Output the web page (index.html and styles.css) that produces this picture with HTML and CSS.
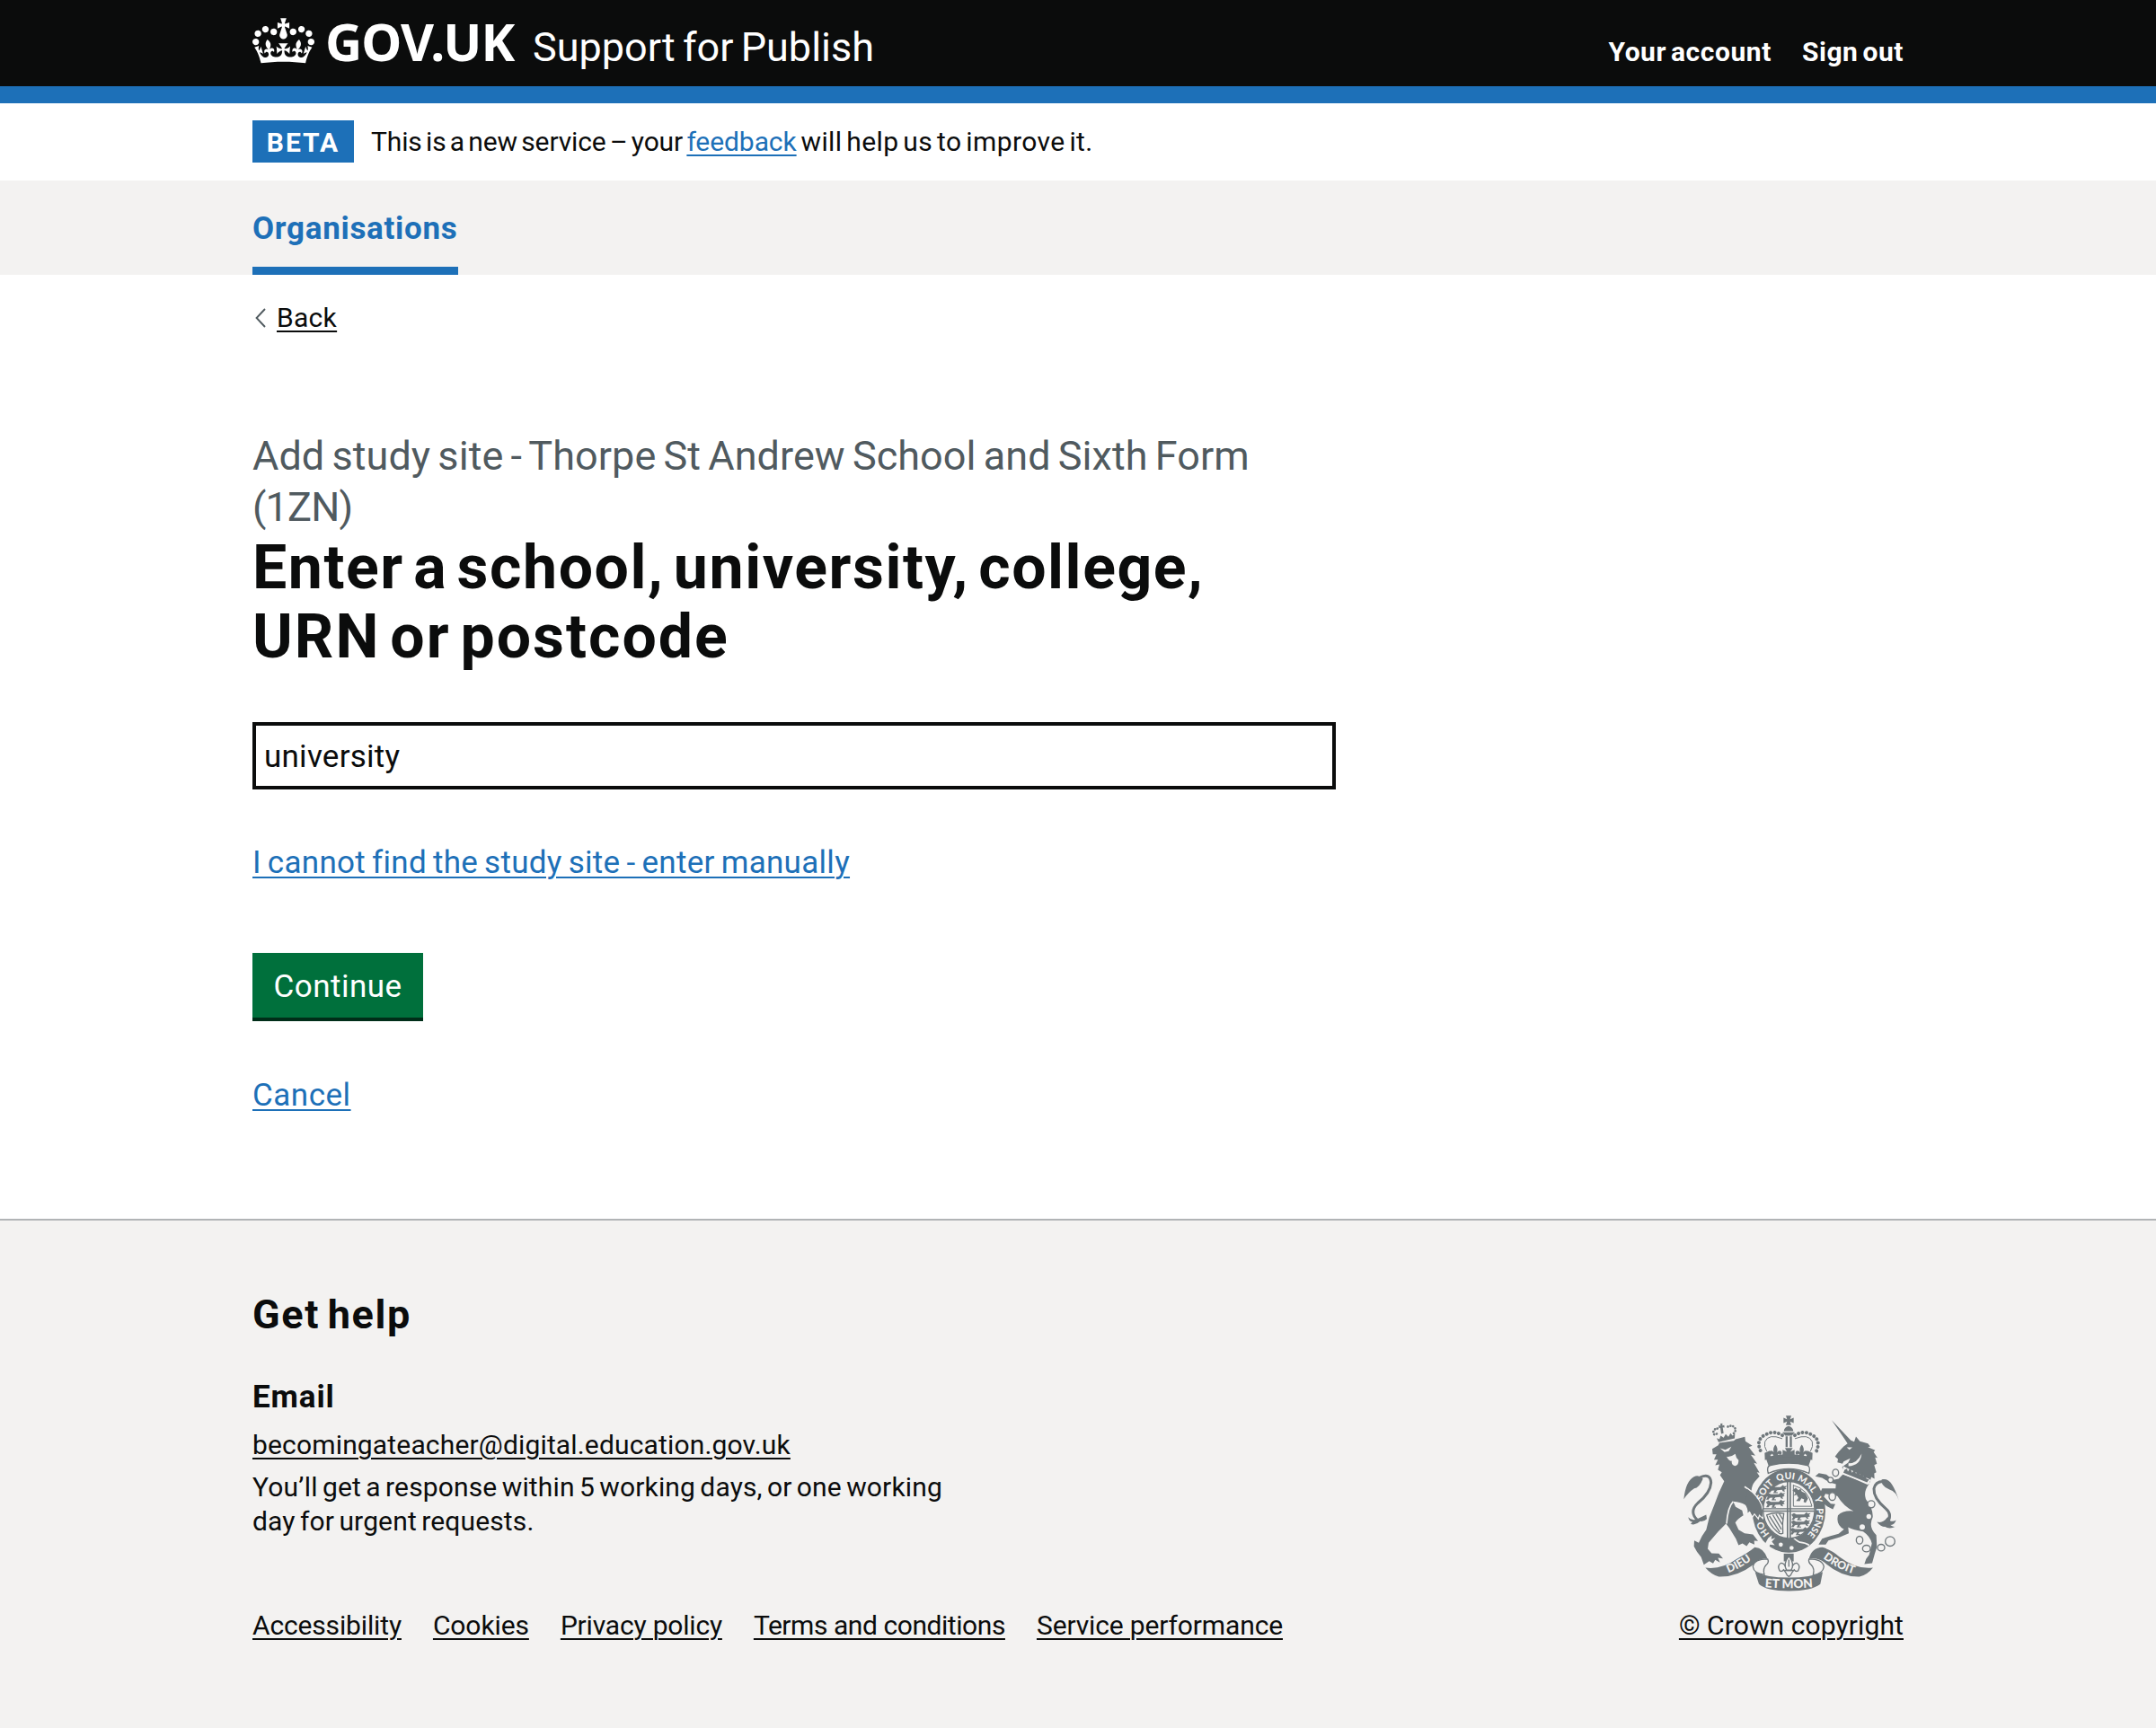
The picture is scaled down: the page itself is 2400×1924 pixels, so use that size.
FILE: index.html
```html
<!DOCTYPE html>
<html lang="en">
<head>
<meta charset="utf-8">
<title>Enter a school, university, college, URN or postcode - Support for Publish - GOV.UK</title>
<link rel="stylesheet" href="styles.css">
</head>
<body>
<header class="header">
  <div class="container header-inner">
    <a class="logo" href="#">
      <svg class="crown" viewBox="0 0 132 97" aria-hidden="true"><path fill="currentColor" fill-rule="evenodd" d="M25 30.2c3.5 1.5 7.7-.2 9.1-3.7 1.5-3.6-.2-7.8-3.9-9.2-3.6-1.4-7.6.3-9.1 3.9-1.4 3.5.3 7.5 3.9 9zM9 39.5c3.6 1.5 7.8-.2 9.2-3.7 1.5-3.6-.2-7.8-3.9-9.1-3.6-1.5-7.6.2-9.1 3.8-1.4 3.5.3 7.5 3.8 9zM4.4 57.2c3.5 1.5 7.7-.2 9.1-3.8 1.5-3.6-.2-7.7-3.9-9.1-3.5-1.5-7.6.3-9.1 3.8-1.4 3.5.3 7.6 3.9 9.1zm38.3-21.4c3.5 1.5 7.7-.2 9.1-3.8 1.5-3.6-.2-7.7-3.9-9.1-3.6-1.5-7.6.3-9.1 3.8-1.3 3.6.4 7.7 3.9 9.1zm64.4-5.6c-3.6 1.5-7.8-.2-9.1-3.7-1.5-3.6.2-7.8 3.8-9.2 3.6-1.4 7.7.3 9.2 3.9 1.3 3.5-.4 7.5-3.9 9zm15.9 9.3c-3.6 1.5-7.7-.2-9.1-3.7-1.5-3.6.2-7.8 3.7-9.1 3.6-1.5 7.7.2 9.2 3.8 1.5 3.5-.3 7.5-3.8 9zm4.7 17.7c-3.6 1.5-7.8-.2-9.2-3.8-1.5-3.6.2-7.7 3.9-9.1 3.6-1.5 7.7.3 9.2 3.8 1.3 3.5-.4 7.6-3.9 9.1zM89.3 35.8c-3.6 1.5-7.8-.2-9.2-3.8-1.4-3.6.2-7.7 3.9-9.1 3.6-1.5 7.7.3 9.2 3.8 1.4 3.6-.3 7.7-3.9 9.1zM69.7 17.7l8.9 4.7V9.3l-8.9 2.8c-.2-.3-.5-.6-.9-.9L72.4 0H59.6l3.5 11.2c-.3.3-.6.5-.9.9l-8.8-2.8v13.1l8.8-4.7c.3.3.6.7.9.9l-5 15.4v.1c-.2.8-.4 1.6-.4 2.4 0 4.1 3.1 7.5 7 8.1h.2c.3 0 .7.1 1 .1.4 0 .7 0 1-.1h.2c4-.6 7.1-4.1 7.1-8.1 0-.8-.1-1.7-.4-2.4V34l-5.1-15.4c.4-.2.7-.6 1-.9zM66 92.8c16.9 0 32.8 1.1 47.1 3.2 4-16.9 8.9-26.7 14-33.5l-9.6-3.4c1 4.9 1.1 7.2 0 10.2-1.5-1.4-3-4.3-4.2-8.7L108.6 76c2.8-2 5-3.2 7.5-3.3-4.4 9.4-10 11.9-13.6 11.2-4.3-.8-6.3-4.6-5.6-7.9 1-4.7 5.7-5.9 8-.5 4.3-8.7-3-11.4-7.6-8.8 7.1-7.2 7.9-13.5 2.1-21.1-8 6.1-8.1 12.3-4.5 20.8-4.7-5.4-12.1-2.5-9.5 6.2 3.4-5.2 7.9-2 7.2 3.1-.6 4.3-6.4 7.8-13.5 7.2-10.3-.9-10.9-8-11.2-13.8 2.5-.5 7.1 1.8 11 7.3L80.2 60c-4.1 4.4-8 5.3-12.3 5.4 1.4-4.4 8-11.6 8-11.6H55.5s6.4 7.2 7.9 11.6c-4.2-.1-8-1-12.3-5.4l1.4 16.4c3.9-5.5 8.5-7.7 10.9-7.3-.3 5.8-.9 12.8-11.1 13.8-7.2.6-12.9-2.9-13.5-7.2-.7-5 3.8-8.3 7.1-3.1 2.7-8.7-4.6-11.6-9.4-6.2 3.7-8.5 3.6-14.7-4.6-20.8-5.8 7.6-5 13.9 2.2 21.1-4.7-2.6-11.9.1-7.7 8.8 2.3-5.5 7.1-4.2 8.1.5.7 3.3-1.3 7.1-5.7 7.9-3.5.7-9-1.8-13.5-11.2 2.5.1 4.7 1.3 7.5 3.3l-4.7-15.4c-1.2 4.4-2.7 7.2-4.3 8.7-1.1-3-.9-5.3 0-10.2l-9.5 3.4c5 6.9 9.9 16.7 14 33.5 14.8-2.1 30.8-3.2 47.7-3.2z"/></svg>
      <span class="logo-text">GOV.UK</span>
    </a>
    <a class="service-name" href="#">Support for Publish</a>
    <nav class="account-nav">
      <a class="account-link" href="#">Your account</a>
      <a class="account-link sign-out" href="#">Sign out</a>
    </nav>
  </div>
</header>

<div class="phase-banner">
  <div class="container phase-inner">
    <strong class="tag">BETA</strong>
    <span class="phase-text">This is a new service – your <a class="link feedback" href="#">feedback</a><span class="phase-end"> will help us to improve it.</span></span>
  </div>
</div>

<nav class="primary-nav">
  <div class="container primary-inner">
    <a class="primary-link" href="#">Organisations</a>
  </div>
</nav>

<div class="container content">
  <a class="back" href="#">
    <svg class="back-arrow" viewBox="0 0 12 22" aria-hidden="true"><path d="M11 1 1.6 11 11 21" fill="none" stroke="#505a5f" stroke-width="1.9"/></svg>
    <span class="back-text">Back</span>
  </a>
  <main class="main">
    <h1 class="title"><span class="caption">Add study site - Thorpe St Andrew School and Sixth Form <span class="code">(1ZN)</span></span>
      <span class="title-line">Enter a school, university, college,</span>
      <span class="title-line second">URN or postcode</span>
    </h1>
    <input class="search" type="text" value="university" aria-label="School, university, college, URN or postcode">
    <a class="link body-link" href="#">I cannot find the study site - enter manually</a>
    <button class="button" type="button">Continue</button>
    <a class="link body-link cancel" href="#">Cancel</a>
  </main>
</div>

<footer class="footer">
  <div class="container footer-inner">
    <div class="footer-main">
      <h2 class="help-title">Get help</h2>
      <h3 class="email-title">Email</h3>
      <a class="footer-link email" href="#">becomingateacher@digital.education.gov.uk</a>
      <p class="response">You’ll get a response within 5 working days, or one working <span class="response-end">day for urgent requests.</span></p>
      <ul class="footer-links">
        <li><a class="footer-link l1" href="#">Accessibility</a></li>
        <li><a class="footer-link l2" href="#">Cookies</a></li>
        <li><a class="footer-link l3" href="#">Privacy policy</a></li>
        <li><a class="footer-link l4" href="#">Terms and conditions</a></li>
        <li><a class="footer-link l5" href="#">Service performance</a></li>
      </ul>
    </div>
    <div class="footer-crest">
      <svg class="crest" viewBox="72 44 720 590" aria-hidden="true">
        <defs>
          <path id="motto-ring" d="M424 471a93 106 0 0 1 0-212a93 106 0 0 1 0 212"/>
          <path id="ribbon-left" d="M201 579Q262 562 316 515"/>
          <path id="ribbon-right" d="M524 512Q578 560 658 580"/>
          <path id="ribbon-mid" d="M332 619Q424 628 516 619"/>
          <g id="fleur"><path d="M0-22C9-11 8 0 3 8C8-4 20-4 21 5C21 13 13 14 11 8C8 12 6 14 5 22H-5C-6 14-8 12-11 8C-13 14-21 13-21 5C-20-4-8-4-3 8C-8 0-9-11 0-22Z"/></g>
          <g id="passant"><path d="M-34-6l8-4 8 4h26l8-7 4 4 10-1-6 6 4 4-8 3 3 6-7-1-3-5-16 1-5 6 7 1v3H-16l4-9-10 1-4 6h-8l5-9-4-5z"/></g>
        </defs>

        <!-- garter, drawn first so that the beasts stand in front of it -->
        <ellipse class="ink" cx="424" cy="365" rx="122" ry="140"/>

        <g class="ink">
          <!-- lion and its crown -->
          <path class="cut" d="M282 287Q305 305 318 322L330 345L336 368L335 386L324 376L321 387L309 372L302 382L294 366L286 372L270 330Z"/>
          <path d="M168 158L188 146L192 138L240 131L246 126L277 118L279 133L302 148L290 152L312 181L297 178L318 208L307 205L326 238L317 236L326 250L310 268Q300 280 299 298L282 287Q305 305 318 322L330 345L336 368L335 386L324 376L321 387L309 372L302 382L294 366L286 372Q290 352 278 345Q262 336 238 334L246 352L268 364L272 380Q252 392 245 404L256 428L276 440L304 444L321 466L308 465L309 478L292 470L283 483L269 474L256 480L247 458L225 422L214 408L188 434L156 472L153 492L166 507L190 508L204 524L187 522L194 538L178 529L171 541L158 533L140 545L131 520L117 502L107 484L108 464L123 472L134 449L148 428L158 388L175 345L190 305L208 266L194 246L200 236L187 228L192 210L178 213L187 194L174 194L182 176L170 176Z"/>
          <path d="M183 122l6 14 54-13 1-16-8 7-7-8-7 12-9-9-7 12-10-7-4 12z"/>
          <path d="M190 79l6 2-1-7 7-1 0 7 6-1 1 8-6-1 3 20-8 2-3-20-5 1z"/>
          <!-- lion tail -->
          <path d="M73 326Q79 266 107 251Q123 243 137 258Q124 290 108 290Q88 303 73 326Z"/>
          <path d="M88 386Q100 400 118 392L148 378L150 392Q140 402 128 400Q112 415 96 409L102 402Q90 400 88 386Z"/>
          <!-- imperial crown -->
          <path d="M346 186q36-10 77-10t77 10l-12 34q-65-13-130 0z"/>
          <path d="M407 99h32q-2-14-16-17-14 3-16 17zM406 54l12 5-4-12h18l-4 12 12-5v18l-12-5 4 12h-18l4-12-12 5zM402 103h42l-10 11h-22zM413 116h7v36h-7zM427 116h7v36h-7zM411 155h26l-8 12 14-6v26h-40v-26l14 6z"/>
          <use href="#fleur" x="379" y="166"/><use href="#fleur" x="467" y="166"/>
          <path d="M343 172l17-8 4 24-20 8zM503 172l-17-8-4 24 20 8z"/>
          <!-- unicorn -->
          <path d="M567 62L631 130L642 134L648 117L661 133L688 140L696 150L688 152L712 163L707 169L720 188L712 187L718 208L709 212L716 236L709 240L710 258L699 252L695 270L606 240L602 218L622 204L629 190L607 200L603 208L586 203L588 192L578 184L590 168L607 150L620 140L605 118Z"/>
          <path d="M604 244L692 275Q672 300 681 326Q706 358 704 386Q688 420 716 446L718 486L711 508L702 540L676 543L682 526L692 512L701 474Q696 450 672 434Q640 430 622 420L624 440L594 453L556 464L547 478L523 478L535 458L560 450L590 442L608 427Q580 410 588 380Q604 363 640 366Q608 352 586 316L546 308L541 318L564 341L579 343L571 360L552 350L537 338L523 318L535 290L580 290L581 276L560 270L535 255L512 250L524 239L549 244L572 262L590 258Z"/>
          <path d="M791 330Q782 300 760 294Q728 280 734 260Q756 256 768 277Q780 295 791 330Z"/>
          <path d="M718 402Q738 408 752 388L764 382L762 398Q772 402 782 396Q776 414 762 412Q770 420 780 418Q760 428 744 418Q732 420 718 402Z"/>
          <!-- ribbons -->
          <path d="M145 555Q200 562 250 526Q290 504 310 487Q340 488 353 526Q326 520 305 545Q250 587 190 585Q166 579 145 555Z"/>
          <path d="M705 555Q650 562 592 518Q568 496 536 487Q500 488 491 526Q520 520 543 538Q600 587 660 585Q686 579 705 555Z"/>
          <path d="M311 569Q350 588 424 588T537 569L529 610Q500 633 424 633T324 610Z"/>
          <path d="M407 508h33v26h-33z"/>
        </g>

        <g class="ink-line">
          <path d="M183 108Q172 116 172 100Q178 86 194 92M240 106Q248 100 244 88Q234 76 216 86" stroke-width="8" stroke-dasharray=".1 9" stroke-linecap="round"/>
          <path d="M128 253Q162 238 164 271Q162 305 120 339Q88 369 121 398" stroke-width="9"/>
          <path d="M750 268Q714 262 708 291Q706 323 748 358Q770 377 753 403" stroke-width="9"/>
          <path d="M402 113Q376 96 352 108Q310 124 330 166" stroke-width="12" stroke-dasharray=".1 13.5" stroke-linecap="round"/>
          <path d="M444 113Q470 96 494 108Q534 124 516 166" stroke-width="12" stroke-dasharray=".1 13.5" stroke-linecap="round"/>
          <path d="M402 124Q356 106 344 134Q340 150 350 166M444 124Q490 106 502 134Q506 150 496 166" stroke-width="3"/>
          <path d="M355 240Q348 218 362 213Q424 199 485 213Q498 218 491 240Q424 210 355 240Z" class="paper" stroke-width="4"/>
          <path d="M353 526Q307 526 304 552Q307 574 342 578Q336 558 348 546Q359 537 353 526ZM491 526Q537 526 541 552Q538 574 505 580Q511 558 499 546Q488 537 491 526Z" class="paper" stroke-width="4"/>
          <g class="paper" stroke-width="4">
            <ellipse cx="580" cy="238" rx="10" ry="12"/><ellipse cx="563" cy="262" rx="9" ry="9"/><ellipse cx="569" cy="317" rx="11" ry="13"/><ellipse cx="699" cy="343" rx="12" ry="12"/><ellipse cx="660" cy="463" rx="11" ry="13"/><ellipse cx="683" cy="491" rx="13" ry="11"/><ellipse cx="732" cy="488" rx="12" ry="11"/><circle cx="762" cy="467" r="16"/>
          </g>
        </g>

        <g class="light">
          <ellipse cx="424" cy="362" rx="87" ry="96"/>
          <path d="M194 156l18 5 20-10-9 15-14 3zM216 184q14 3 29-9 2 14 11 21 1 18-12 19-12-2-11-17-9 3-17-14z"/>
          <path d="M617 153l19 0-10 8zM623 216Q663 214 667 174Q651 208 623 206Z"/>
          <path d="M606 216l92 46-10 16-88-38z"/>
          <circle cx="669" cy="419" r="9"/><circle cx="691" cy="384" r="8"/>
          <circle cx="397" cy="478" r="7"/><circle cx="433" cy="489" r="7"/>
          <path d="M345 474l10-18 12-9-2 13 14-5-12 13 10 12-16-2-4 14z"/>
        </g>
        <path class="split" d="M238 334Q220 352 216 408M276 284Q310 305 322 330M440 456Q448 464 460 470Q480 472 492 480"/>

        <g class="ink">
          <path d="M338 356h171v4H338zM338 364h171v4H338zM417 268h5v188h-5zM426 268h5v188h-5z"/>
          <use href="#passant" x="388" y="292"/><use href="#passant" x="382" y="316"/><use href="#passant" x="382" y="341"/>
          <use href="#passant" x="467" y="383"/><use href="#passant" x="466" y="407"/><use href="#passant" x="463" y="432"/>
          <path d="M610 228l8-4 3 10 8-12 6 16 9-12 4 15 9-11 4 15 9-9 2 14 10-5 1 13 9 2-7 10-79-32z"/>
          <path d="M447 288l9 8 7-5 4 10 12 5 9 18-8 14-7-3 2-8-9-4-6 10-12-1 8-10-6-11-10 4 6-10-10-9z"/>
        </g>
        <g class="ink-line" stroke-width="4">
          <path d="M439 278v72h62M439 280q50 12 62 70" stroke-width="3"/>
          <path d="M350 379Q376 368 407 374Q401 407 404 440Q395 446 383 433Q359 411 350 379ZM359 382L394 437M370 378L399 427M381 376L402 411M392 375L404 394"/>
          <ellipse cx="424" cy="362" rx="86" ry="95"/>
          <path class="paper" d="M416 562Q410 538 397 540Q384 548 393 565Q401 570 406 562Q414 570 418 580L424 585L430 580Q434 570 442 562Q447 570 455 565Q464 548 451 540Q438 538 432 562Z"/>
          <path class="paper" d="M424 516Q445 542 431 564H417Q403 542 424 516Z"/>
          <path d="M409 564h30M424 528v24"/>
        </g>
        <!-- lion's paw resting on the shield -->
        <path class="paw" d="M284 292Q305 305 318 322L330 345L337 368L335 386L324 376L321 387L309 372L302 382L294 366L280 345Z"/>

        <g class="motto">
          <text><textPath href="#motto-ring" startOffset="97">HO</textPath></text>
          <text><textPath href="#motto-ring" startOffset="224">SOIT</textPath></text>
          <text><textPath href="#motto-ring" startOffset="302">QUI</textPath></text>
          <text><textPath href="#motto-ring" startOffset="374">MAL</textPath></text>
          <text><textPath href="#motto-ring" startOffset="434">Y</textPath></text>
          <text><textPath href="#motto-ring" startOffset="508">PENSE</textPath></text>
        </g>
        <g class="motto ribbon">
          <text><textPath href="#ribbon-left" startOffset="50%">DIEU</textPath></text>
          <text><textPath href="#ribbon-right" startOffset="50%">DROIT</textPath></text>
          <text class="et-mon"><textPath href="#ribbon-mid" startOffset="50%">ET MON</textPath></text>
        </g>
      </svg>
      <a class="footer-link copyright" href="#">© Crown copyright</a>
    </div>
  </div>
</footer>
</body>
</html>
```
FILE: styles.css
```css
* {
  box-sizing: border-box;
}

body {
  margin: 0;
  background: #fff;
  color: #0b0c0c;
  font-family: Roboto, "Liberation Sans", sans-serif;
  font-size: 30px;
  line-height: 38px;
  -webkit-font-smoothing: antialiased;
}

a {
  color: inherit;
  text-decoration: none;
}

h1,
h2,
h3,
p,
ul {
  margin: 0;
  padding: 0;
}

.container {
  width: 1838px;
  margin: 0 auto;
}

.link,
.footer-link,
.back-text {
  text-decoration: underline;
  text-decoration-thickness: 2px;
  text-underline-offset: 3.5px;
}

.link {
  color: #1d70b8;
}

/* Header */
.header {
  height: 115px;
  background: #0b0c0c;
  border-bottom: 19px solid #1d70b8;
  color: #fff;
}

.header-inner {
  display: flex;
  align-items: flex-start;
}

.logo {
  display: flex;
  width: 312px;
  padding-top: 16px;
}

.crown {
  width: 69px;
  height: 51px;
  margin: 4px 12px 0 0;
}

.logo-text {
  font-family: "Noto Sans", sans-serif;
  font-size: 57px;
  font-weight: 700;
  line-height: 60px;
  letter-spacing: -0.9px;
}

.service-name {
  padding-top: 24px;
  font-size: 45px;
  line-height: 57px;
  letter-spacing: 0;
  word-spacing: -3px;
}

.account-nav {
  display: flex;
  gap: 34px;
  margin-left: auto;
  padding-top: 39px;
  font-weight: 700;
}

.account-link {
  letter-spacing: 0.55px;
  word-spacing: -3px;
}

/* Phase banner */
.phase-banner {
  height: 86px;
  padding-top: 19px;
}

.phase-inner {
  display: flex;
  align-items: center;
  gap: 19px;
}

.tag {
  width: 113px;
  height: 47px;
  background: #1d70b8;
  color: #fff;
  line-height: 49px;
  text-align: center;
  letter-spacing: 2px;
}

.phase-text {
  padding-top: 1px;
  letter-spacing: -0.13px;
  word-spacing: -3px;
}

.feedback {
  letter-spacing: -0.08px;
}

.phase-end {
  letter-spacing: 0.4px;
}

/* Primary navigation */
.primary-nav {
  height: 105px;
  background: #f3f2f1;
}

.primary-inner {
  display: flex;
}

.primary-link {
  height: 105px;
  padding-top: 30px;
  border-bottom: 9px solid #1d70b8;
  color: #1d70b8;
  font-size: 35px;
  font-weight: 700;
  line-height: 48px;
  letter-spacing: 0.7px;
}

/* Content */
.content {
  height: 1051px;
  padding-top: 29px;
}

.back {
  display: flex;
  align-items: center;
  width: max-content;
}

.back-arrow {
  width: 12px;
  height: 22px;
  margin: 0 12px 0 3px;
}

.back-text {
  letter-spacing: 0.3px;
}

.main {
  display: flex;
  flex-direction: column;
  align-items: flex-start;
  width: 1206px;
  padding-top: 106px;
}

.title {
  font-size: 68px;
  line-height: 76.6px;
  letter-spacing: 1.55px;
  word-spacing: -8px;
}

.title-line {
  display: block;
}

.second {
  letter-spacing: 2px;
}

.caption {
  display: block;
  margin-bottom: 1px;
  color: #505a5f;
  font-size: 45px;
  font-weight: 400;
  line-height: 57px;
  letter-spacing: 0.05px;
  word-spacing: -3px;
}

.code {
  display: block;
  letter-spacing: -0.8px;
}

.search {
  width: 1206px;
  height: 75px;
  margin: 57px 0 0;
  padding: 1px 9px 0;
  border: 4px solid #0b0c0c;
  border-radius: 0;
  background: #fff;
  color: #0b0c0c;
  font: 35px/48px Roboto, "Liberation Sans", sans-serif;
  letter-spacing: 0.25px;
}

.body-link {
  margin-top: 58px;
  font-size: 35px;
  line-height: 48px;
  letter-spacing: 0.3px;
  word-spacing: -2px;
}

.button {
  width: 190px;
  height: 72px;
  margin-top: 76px;
  padding: 4px 0 0;
  border: 0;
  background: #00703c;
  box-shadow: 0 4px 0 #002d18;
  color: #fff;
  font: 35px/48px Roboto, "Liberation Sans", sans-serif;
  letter-spacing: 0.5px;
}

.cancel {
  margin-top: 63px;
  letter-spacing: 0.5px;
}

/* Footer */
.footer {
  height: 567px;
  border-top: 2px solid #b1b4b6;
  background: #f3f2f1;
}

.footer-inner {
  display: flex;
  justify-content: space-between;
}

.footer-main {
  padding-top: 76px;
}

.help-title {
  font-size: 45px;
  line-height: 57px;
  letter-spacing: 1.6px;
  word-spacing: -4px;
}

.email-title {
  margin-top: 40px;
  font-size: 35px;
  line-height: 48px;
  letter-spacing: 0.9px;
}

.email {
  display: block;
  margin-top: 10px;
  letter-spacing: 0.16px;
}

.response {
  margin-top: 9px;
  line-height: 38.3px;
  letter-spacing: 0.15px;
  word-spacing: -2.3px;
}

.response-end {
  display: block;
}

.footer-links {
  display: flex;
  gap: 35px;
  margin-top: 77px;
  list-style: none;
}

.l1 { letter-spacing: -0.15px; }
.l2 { letter-spacing: -0.1px; }
.l3 { letter-spacing: -0.2px; }
.l4 { letter-spacing: -0.44px; }
.l5 { letter-spacing: -0.14px; }

.footer-crest {
  display: flex;
  flex-direction: column;
  align-items: center;
  padding-top: 216px;
}

.crest {
  width: 240px;
  height: 197px;
  margin-bottom: 19px;
}

.copyright {
  letter-spacing: 0.1px;
}

.ink {
  fill: #6f777b;
}

.ink-line {
  fill: none;
  stroke: #6f777b;
}

.cut {
  stroke: #f3f2f1;
  stroke-width: 8;
}

.paw {
  fill: #6f777b;
}

.paper,
.light {
  fill: #f3f2f1;
}

.split {
  fill: none;
  stroke: #f3f2f1;
  stroke-width: 5;
}

.motto {
  fill: #f3f2f1;
  font: 900 31px Lato, sans-serif;
  text-anchor: middle;
}

.ribbon {
  font-size: 37px;
}

.et-mon {
  font-size: 41px;
}
```
